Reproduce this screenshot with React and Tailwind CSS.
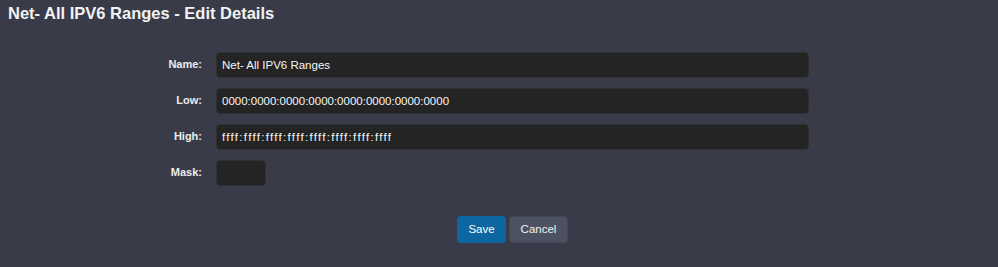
import { useState } from 'react'

const FIELDS = [
  { key: 'name', label: 'Name:', width: 'w-[593px]', extra: '' },
  { key: 'low', label: 'Low:', width: 'w-[593px]', extra: '' },
  { key: 'high', label: 'High:', width: 'w-[593px]', extra: 'tracking-[1.3px]' },
  { key: 'mask', label: 'Mask:', width: 'w-[50px]', extra: '' },
]

export default function App() {
  const [values, setValues] = useState({
    name: 'Net- All IPV6 Ranges',
    low: '0000:0000:0000:0000:0000:0000:0000:0000',
    high: 'ffff:ffff:ffff:ffff:ffff:ffff:ffff:ffff',
    mask: '',
  })

  return (
    <div className="min-h-[267px] bg-[#393c48] text-[#f2f2f2] font-['Liberation_Sans',Arial,sans-serif]">
      <h1 className="px-2 pt-[3px] text-[16.5px] font-bold leading-[20px]">
        Net- All IPV6 Ranges - Edit Details
      </h1>

      {/* Form */}
      <div className="mt-[29px] flex flex-col gap-[10px]">
        {FIELDS.map(f => (
          <div key={f.key} className="flex items-start gap-[14px]">
            <label className="w-[202px] pt-[5px] text-right text-[11px] font-bold leading-[14px] text-[#ececec]">
              {f.label}
            </label>
            <input
              value={values[f.key]}
              onChange={e => setValues(v => ({ ...v, [f.key]: e.target.value }))}
              className={`${f.width} ${f.extra} h-[26px] rounded-[4px] border border-[#2f3034] bg-[#242424] px-[5px] text-[11.5px] text-[#f6f6f6] outline-none`}
            />
          </div>
        ))}
      </div>

      {/* Buttons */}
      <div className="mt-[30px] ml-[457px] flex gap-[3px]">
        <button className="h-[27px] w-[49px] rounded-[4px] bg-[#0d669f] text-[11.5px] text-white">
          Save
        </button>
        <button className="h-[27px] w-[59px] rounded-[4px] border border-[#434857] bg-[#4c5261] text-[11.5px] text-[#f2f2f2]">
          Cancel
        </button>
      </div>
    </div>
  )
}
